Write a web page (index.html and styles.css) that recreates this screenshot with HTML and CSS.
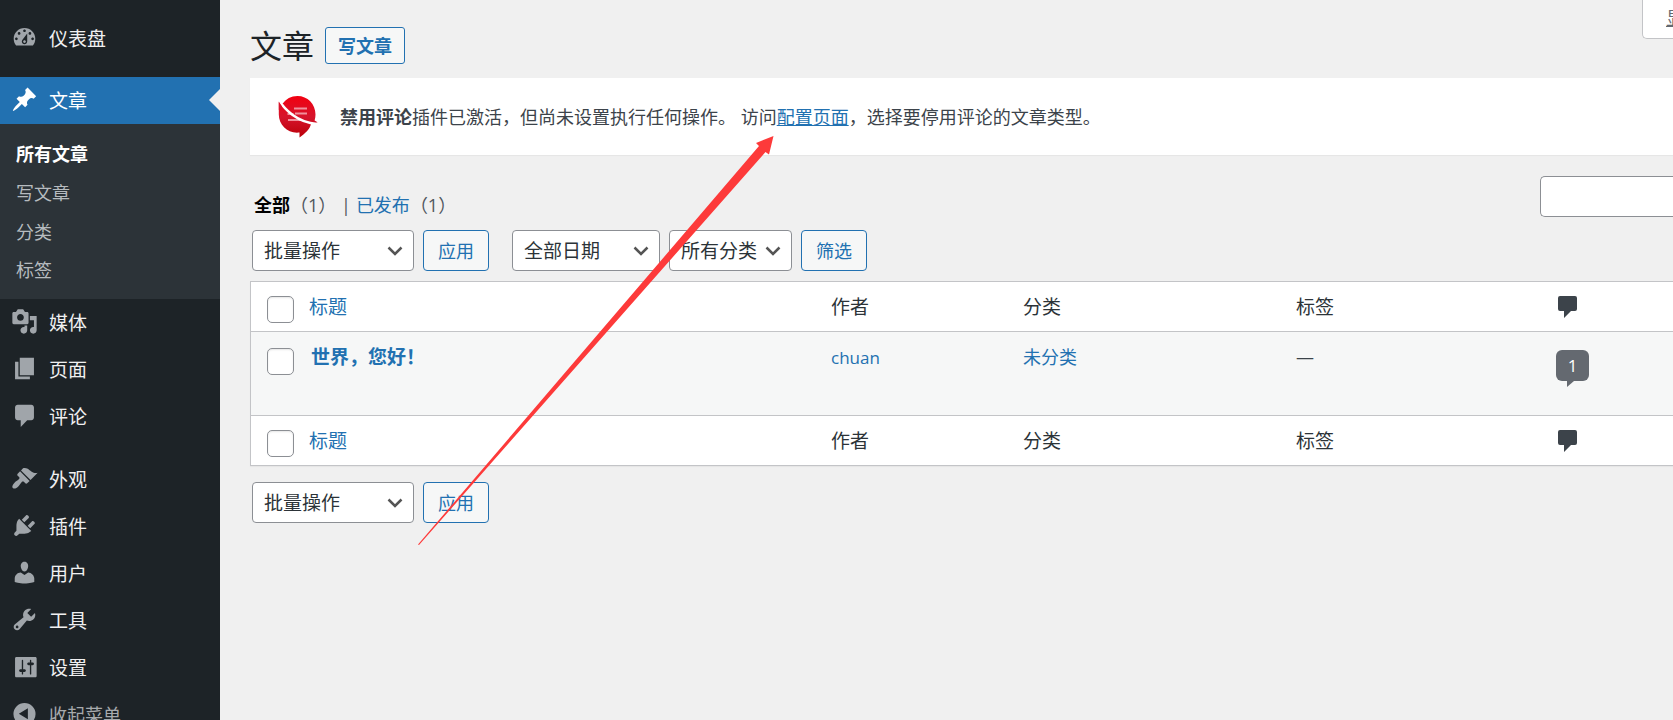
FILE: index.html
```html
<!DOCTYPE html>
<html lang="zh-CN">
<head>
<meta charset="utf-8">
<title>文章</title>
<link rel="stylesheet" href="styles.css">
</head>
<body>
<div class="page">
  <nav class="sidebar">
    <ul class="menu">
      <li><a class="item" href="#"><span class="ico"><svg viewBox="0 0 20 20"><path d="M3.76 16h12.48c1.1-1.37 1.76-3.11 1.76-5 0-4.42-3.58-8-8-8s-8 3.58-8 8c0 1.89.66 3.63 1.76 5zM10 4c.55 0 1 .45 1 1s-.45 1-1 1-1-.45-1-1 .45-1 1-1zM6 6c.55 0 1 .45 1 1s-.45 1-1 1-1-.45-1-1 .45-1 1-1zm8 0c.55 0 1 .45 1 1s-.45 1-1 1-1-.45-1-1 .45-1 1-1zm-5.37 5.55L12 7v6c0 1.1-.9 2-2 2s-2-.9-2-2c0-.57.24-1.08.63-1.45zM4 10c.55 0 1 .45 1 1s-.45 1-1 1-1-.45-1-1 .45-1 1-1zm12 0c.55 0 1 .45 1 1s-.45 1-1 1-1-.45-1-1 .45-1 1-1zm-5 3c0-.55-.45-1-1-1s-1 .45-1 1 .45 1 1 1 1-.45 1-1z" fill-rule="evenodd"/></svg></span>仪表盘</a></li>
      <li class="sep"></li>
      <li>
        <a class="item current" href="#"><span class="ico"><svg viewBox="0 0 20 20"><path d="M10.44 3.02l1.82-1.82 6.36 6.35-1.83 1.82c-1.05-.68-2.48-.57-3.41.36l-.75.75c-.92.93-1.04 2.35-.35 3.41l-1.83 1.82-2.41-2.41-2.8 2.79c-.42.42-3.38 2.71-3.8 2.29s1.86-3.39 2.28-3.81l2.79-2.79L4.1 9.36l1.83-1.82c1.05.69 2.48.57 3.4-.36l.75-.75c.93-.92 1.05-2.35.36-3.41z"/></svg></span>文章</a>
        <ul class="submenu">
          <li><a class="active" href="#">所有文章</a></li>
          <li><a href="#">写文章</a></li>
          <li><a href="#">分类</a></li>
          <li><a href="#">标签</a></li>
        </ul>
      </li>
      <li><a class="item" href="#"><span class="ico"><svg viewBox="0 0 20 20"><path d="M13 11V4c0-.55-.45-1-1-1h-1.67L9 1H5L3.67 3H2c-.55 0-1 .45-1 1v7c0 .55.45 1 1 1h10c.55 0 1-.45 1-1zM7 4.5c1.38 0 2.5 1.12 2.5 2.5S8.38 9.5 7 9.5 4.5 8.38 4.5 7 5.62 4.5 7 4.5zM14 6h5v10.5c0 1.38-1.12 2.5-2.5 2.5S14 17.88 14 16.5s1.12-2.5 2.5-2.5c.17 0 .34.02.5.05V9h-3V6zM10 14.05V13h2v3.5c0 1.38-1.12 2.5-2.5 2.5S7 17.88 7 16.5 8.12 14 9.5 14c.17 0 .34.02.5.05z" fill-rule="evenodd"/></svg></span>媒体</a></li>
      <li><a class="item" href="#"><span class="ico"><svg viewBox="0 0 20 20"><path d="M6.500 15V2H17v13H6.500zM5.500 16H14v2H3V5h2.500v11z"/></svg></span>页面</a></li>
      <li><a class="item" href="#"><span class="ico"><svg viewBox="0 0 20 20"><path d="M5 2h10c1.1 0 2 .9 2 2v7.500c0 1.1-.9 2-2 2h-3l-4.800 5v-5H5c-1.1 0-2-.9-2-2V4c0-1.1.9-2 2-2z"/></svg></span>评论</a></li>
      <li class="sep wide"></li>
      <li><a class="item" href="#"><span class="ico"><svg viewBox="0 0 20 20"><path d="M14.48 11.06L7.41 3.99l1.5-1.5c.5-.56 2.3-.47 3.51.32 1.21.8 1.43 1.28 2.91 2.1 1.18.64 2.45 1.26 4.45.85zm-.71.71L6.7 4.7 4.93 6.47c-.39.39-.39 1.02 0 1.41l1.06 1.06c.39.39.39 1.03 0 1.42-.6.6-1.43 1.11-2.21 1.69-.35.26-.7.53-1.01.84C1.43 14.23.4 16.08 1.4 17.07c.99 1 2.84-.03 4.18-1.36.31-.31.58-.66.85-1.02.57-.78 1.08-1.61 1.69-2.21.39-.39 1.02-.39 1.41 0l1.06 1.06c.39.39 1.02.39 1.41 0z"/></svg></span>外观</a></li>
      <li><a class="item" href="#"><span class="ico"><svg viewBox="0 0 20 20"><path d="M13.11 4.36L9.87 7.6 8 5.73l3.24-3.24c.35-.34 1.05-.2 1.56.32.52.51.66 1.21.31 1.55zm-8 1.77l.91-1.12 9.01 9.01-1.19.84c-.71.71-2.63 1.16-3.82 1.16H6.14L4.9 17.26c-.59.59-1.54.59-2.12 0-.59-.58-.59-1.53 0-2.12l1.24-1.24v-3.88c0-1.13.4-3.19 1.09-3.89zm7.26 3.97l3.24-3.24c.34-.35 1.04-.21 1.55.31.52.51.66 1.21.31 1.55l-3.24 3.25z"/></svg></span>插件</a></li>
      <li><a class="item" href="#"><span class="ico"><svg viewBox="0 0 20 20"><path d="M10 9.25c-2.27 0-2.73-3.44-2.73-3.44C7 4.02 7.82 2 9.97 2c2.16 0 2.98 2.02 2.71 3.81 0 0-.41 3.44-2.68 3.44zm0 2.57L12.72 10c2.39 0 4.52 2.33 4.52 4.53v2.49s-3.65 1.13-7.24 1.13c-3.65 0-7.24-1.13-7.24-1.13v-2.49c0-2.25 1.94-4.48 4.47-4.48z"/></svg></span>用户</a></li>
      <li><a class="item" href="#"><span class="ico"><svg viewBox="0 0 20 20"><path d="M16.68 9.77c-1.34 1.34-3.3 1.67-4.95.99l-5.41 6.52c-.99.99-2.59.99-3.58 0s-.99-2.59 0-3.57l6.52-5.42c-.68-1.65-.35-3.61.99-4.95 1.28-1.28 3.12-1.62 4.72-1.06l-2.89 2.89 2.82 2.82 2.86-2.87c.53 1.58.18 3.39-1.08 4.65zM3.81 16.21c.4.39 1.04.39 1.43 0 .4-.4.4-1.04 0-1.43-.39-.4-1.03-.4-1.43 0-.39.39-.39 1.03 0 1.43z" fill-rule="evenodd"/></svg></span>工具</a></li>
      <li><a class="item" href="#"><span class="ico"><svg viewBox="0 0 20 20"><path d="M19 17V4c0-.55-.45-1-1-1H4c-.55 0-1 .45-1 1v13c0 .55.45 1 1 1h14c.55 0 1-.45 1-1zM9 12h1c.55 0 1 .45 1 1s-.45 1-1 1H9v1.500c0 .28-.22.5-.5.5s-.5-.22-.5-.5V14H7c-.55 0-1-.45-1-1s.45-1 1-1h1V5.500c0-.28.22-.5.5-.5s.5.22.5.5V12zm5-3h-1c-.55 0-1-.45-1-1s.45-1 1-1h1V5.500c0-.28.22-.5.5-.5s.5.22.5.5V7h1c.55 0 1 .45 1 1s-.45 1-1 1h-1v6.500c0 .28-.22.5-.5.5s-.5-.22-.5-.5V9z" fill-rule="evenodd"/></svg></span>设置</a></li>
      <li><button class="item collapse" type="button"><span class="ico"><svg viewBox="0 0 20 20"><path d="M10 2.200a8.200 8.200 0 1 0 0 16.400 8.200 8.200 0 0 0 0-16.400zM12.500 6.200v8L5.800 10.200z" fill-rule="evenodd"/></svg></span>收起菜单</button></li>
    </ul>
  </nav>

  <main class="content">
    <button class="screen-options" type="button">显示选项</button>
    <header class="heading">
      <h1>文章</h1>
      <a class="btn add-new" href="#">写文章</a>
    </header>

    <section class="notice">
      <svg class="logo" viewBox="0 0 40 42">
        <defs><linearGradient id="red" x1="0" y1="0" x2="0" y2="1"><stop offset="0" stop-color="#f20010"/><stop offset=".5" stop-color="#d6142c"/><stop offset="1" stop-color="#bb0009"/></linearGradient></defs>
        <path fill="url(#red)" d="M19.500 0C29.500 0 37.500 8 37.500 18.500c0 2-.3 4-.9 6l2.900 1.800-2.500 1.200-4 .500c-1 5-6 9.500-11.500 13.500V36.500C10 38 .8 29 .8 18.500V6l4 1.500C8 3 13 0 19.500 0z"/>
        <g stroke="#f0909c" stroke-width="2"><path d="M16 12.500h13M17 17.500h12M9.500 18h6M10 24h13"/></g>
        <path fill="none" stroke="#fff" stroke-width="2.500" d="M.5 3.500C6 13 19 26.500 39 28"/>
        <path fill="#fff" d="M0 0h4.500v7.500L.8 2z"/>
        <path fill="#d6142c" d="M.8 5.500L4 10.500.8 14z"/>
      </svg>
      <p><strong>禁用评论</strong>插件已激活，但尚未设置执行任何操作。 访问<a href="#">配置页面</a>，选择要停用评论的文章类型。</p>
    </section>

    <div class="filters">
      <ul class="views">
        <li><a class="all" href="#">全部</a><span>（1）</span> |</li>
        <li><a href="#">已发布</a><span>（1）</span></li>
      </ul>
      <input class="search" type="search" aria-label="搜索文章">
    </div>

    <div class="tablenav">
      <select class="bulk" aria-label="批量操作"><option>批量操作</option></select>
      <button class="btn apply" type="button">应用</button>
      <select class="date" aria-label="按日期筛选"><option>全部日期</option></select>
      <select class="cat" aria-label="按分类筛选"><option>所有分类</option></select>
      <button class="btn" type="button">筛选</button>
    </div>

    <table class="posts">
      <colgroup><col class="c-check"><col><col class="c-author"><col class="c-cats"><col class="c-tags"><col class="c-comments"></colgroup>
      <thead>
        <tr>
          <td class="check"><input type="checkbox" aria-label="全选"></td>
          <th><a href="#">标题</a></th><th>作者</th><th>分类</th><th>标签</th>
          <th class="comments"><svg class="bubble" role="img" aria-label="评论" viewBox="0 0 19 22"><path d="M2 0h15a2 2 0 0 1 2 2v11a2 2 0 0 1-2 2h-4l-7 7v-7H2a2 2 0 0 1-2-2V2a2 2 0 0 1 2-2z"/></svg></th>
        </tr>
      </thead>
      <tbody>
        <tr>
          <td class="check"><input type="checkbox" aria-label="选择世界，您好！"></td>
          <td class="title"><a href="#">世界，您好！</a></td>
          <td><a class="author" href="#">chuan</a></td>
          <td><a href="#">未分类</a></td>
          <td>—</td>
          <td class="comments"><a class="count" href="#">1</a></td>
        </tr>
      </tbody>
      <tfoot>
        <tr>
          <td class="check"><input type="checkbox" aria-label="全选"></td>
          <th><a href="#">标题</a></th><th>作者</th><th>分类</th><th>标签</th>
          <th class="comments"><svg class="bubble" role="img" aria-label="评论" viewBox="0 0 19 22"><path d="M2 0h15a2 2 0 0 1 2 2v11a2 2 0 0 1-2 2h-4l-7 7v-7H2a2 2 0 0 1-2-2V2a2 2 0 0 1 2-2z"/></svg></th>
        </tr>
      </tfoot>
    </table>

    <div class="tablenav bottom">
      <select class="bulk" aria-label="批量操作"><option>批量操作</option></select>
      <button class="btn apply" type="button">应用</button>
    </div>

    <svg class="pointer" viewBox="0 0 356 410" aria-hidden="true"><path d="M355.500 1L338 8l3 3L0 409.500l1 .5L347.500 17l3.500 2.500z"/></svg>
  </main>
</div>
</body>
</html>
```
FILE: styles.css
```css
* { box-sizing: border-box; }

html { overflow: hidden; }

body {
  margin: 0;
  background: #f0f0f0;
  color: #3c434a;
  font: 18px/24px "Open Sans", "Noto Sans CJK SC", sans-serif;
}

ul { list-style: none; margin: 0; padding: 0; }
a { color: #2271b1; text-decoration: none; }
button, select, input { font: inherit; margin: 0; }

.page { display: flex; height: 100vh; }

/* Sidebar */
.sidebar {
  flex: none;
  width: 220px;
  min-height: 100vh;
  background: #1d2327;
  overflow: hidden;
}
.menu { padding-top: 15px; }
.sep { height: 15px; }
.sep.wide { height: 16px; }
.item {
  position: relative;
  display: flex;
  align-items: center;
  width: 100%;
  height: 47px;
  font-size: 19px;
  color: #f0f0f1;
}
.ico {
  flex: none;
  display: flex;
  justify-content: center;
  width: 49px;
  padding-bottom: 2px;
}
.ico svg { width: 27px; height: 27px; fill: #a0a5aa; }
.item.current { background: #2271b1; color: #fff; }
.current .ico svg { fill: #fff; }
.item.current::after {
  content: "";
  position: absolute;
  right: 0;
  top: 12px;
  border: 11px solid transparent;
  border-left-width: 0;
  border-right-color: #f0f0f0;
}
.submenu { padding: 11px 0 10px; background: #2c3338; }
.submenu a {
  display: block;
  padding: 0 16px;
  line-height: 38px;
  color: #b6bbbf;
}
.submenu li + li { margin-top: 1px; }
.submenu li:last-child { margin-top: 0; }
.submenu .active { color: #fff; font-weight: 700; }
.collapse {
  padding: 0;
  border: 0;
  background: none;
  font-size: 18px;
  color: #a7aaad;
}

/* Content */
.content {
  position: relative;
  flex: 1;
  min-width: 0;
  padding: 27px 0 0 30px;
}
.screen-options {
  position: absolute;
  top: 0;
  right: 0;
  width: 31px;
  height: 39px;
  padding: 0 0 2px 23px;
  overflow: hidden;
  border: 1px solid #c3c4c7;
  border-width: 0 0 1px 1px;
  border-radius: 0 0 0 5px;
  background: #fff;
  color: #646970;
  text-align: left;
  white-space: nowrap;
  text-decoration: underline;
}
.heading { display: flex; align-items: center; gap: 11px; height: 37px; }
h1 {
  margin: 0;
  font-size: 32px;
  line-height: 37px;
  font-weight: 400;
  color: #1d2327;
}
.btn {
  height: 41px;
  padding: 0 14px;
  border: 1px solid #2271b1;
  border-radius: 4px;
  background: #f6f7f7;
  color: #2271b1;
}
.add-new {
  height: 37px;
  padding: 0 12px;
  border-radius: 3px;
  line-height: 37px;
  font-weight: 700;
}

.notice {
  display: flex;
  align-items: center;
  gap: 22px;
  height: 77px;
  margin-top: 14px;
  padding-left: 28px;
  background: #fff;
  box-shadow: 0 1px 1px rgba(0, 0, 0, .04);
}
.notice p { margin: 0; }
.notice a { text-decoration: underline; }
.logo { width: 40px; height: 42px; }

.filters {
  display: flex;
  justify-content: space-between;
  align-items: flex-end;
  height: 41px;
  margin-top: 21px;
}
.views { display: flex; gap: 5px; padding-left: 4px; color: #50575e; }
.views .all { color: #000; font-weight: 700; }
.search {
  width: 133px;
  height: 41px;
  border: 1px solid #8c8f94;
  border-right: 0;
  border-radius: 5px 0 0 5px;
  background: #fff;
}

.tablenav { display: flex; gap: 9px; margin-top: 13px; padding-left: 2px; }
.tablenav.bottom { margin-top: 16px; }
.apply { margin-right: 14px; }
select {
  height: 41px;
  padding: 0 0 0 11px;
  appearance: none;
  border: 1px solid #8c8f94;
  border-radius: 4px;
  background: #fff url("data:image/svg+xml,%3Csvg xmlns='http://www.w3.org/2000/svg' width='16' height='10' viewBox='0 0 16 10'%3E%3Cpath d='M1.500 1.500L8 8l6.500-6.500' fill='none' stroke='%23555' stroke-width='2.500'/%3E%3C/svg%3E") no-repeat right 10px center;
  font-size: 19px;
  color: #2c3338;
}
.bulk { width: 162px; }
.date { width: 148px; }
.cat { width: 123px; }

.posts {
  width: 100%;
  margin-top: 10px;
  table-layout: fixed;
  border-collapse: separate;
  border-spacing: 0;
  border: 1px solid #c3c4c7;
  border-right: 0;
  background: #fff;
  box-shadow: 0 1px 1px rgba(0, 0, 0, .04);
}
.c-check { width: 47px; }
.c-author { width: 192px; }
.c-cats { width: 273px; }
.c-tags { width: 260px; }
.c-comments { width: 128px; }
.posts th, .posts td { padding: 13px 11px 11px; text-align: left; vertical-align: top; }
.posts th { height: 49px; font-size: 19px; font-weight: 400; color: #2c3338; }
.posts tbody td {
  height: 85px;
  border: solid #c3c4c7;
  border-width: 1px 0;
  background: #f6f7f7;
}
.posts .title { padding-left: 13px; font-size: 19px; font-weight: 700; }
.posts .check { padding: 14px 0 0 16px; }
.posts tbody .check { padding-top: 16px; }
.check input {
  display: block;
  width: 27px;
  height: 27px;
  appearance: none;
  border: 1px solid #8c8f94;
  border-radius: 5px;
  background: #fff;
  box-shadow: inset 0 1px 2px rgba(0, 0, 0, .1);
}
.author { font-size: 17px; }
.posts .comments { padding-top: 14px; padding-left: 13px; }
.posts tbody .comments { padding-top: 18px; padding-left: 11px; }
.bubble { display: block; width: 19px; height: 22px; fill: #3c434a; }
.count {
  position: relative;
  display: block;
  width: 33px;
  height: 31px;
  border-radius: 6px;
  background: #646970;
  color: #fff;
  font-size: 17px;
  line-height: 31px;
  text-align: center;
}
.count::after {
  content: "";
  position: absolute;
  left: 11px;
  top: 31px;
  border-top: 6px solid #646970;
  border-right: 7px solid transparent;
}

/* Annotation arrow over the page */
.pointer {
  position: absolute;
  left: 198px;
  top: 135px;
  width: 356px;
  height: 410px;
  fill: #fd3a3a;
  pointer-events: none;
}
```
